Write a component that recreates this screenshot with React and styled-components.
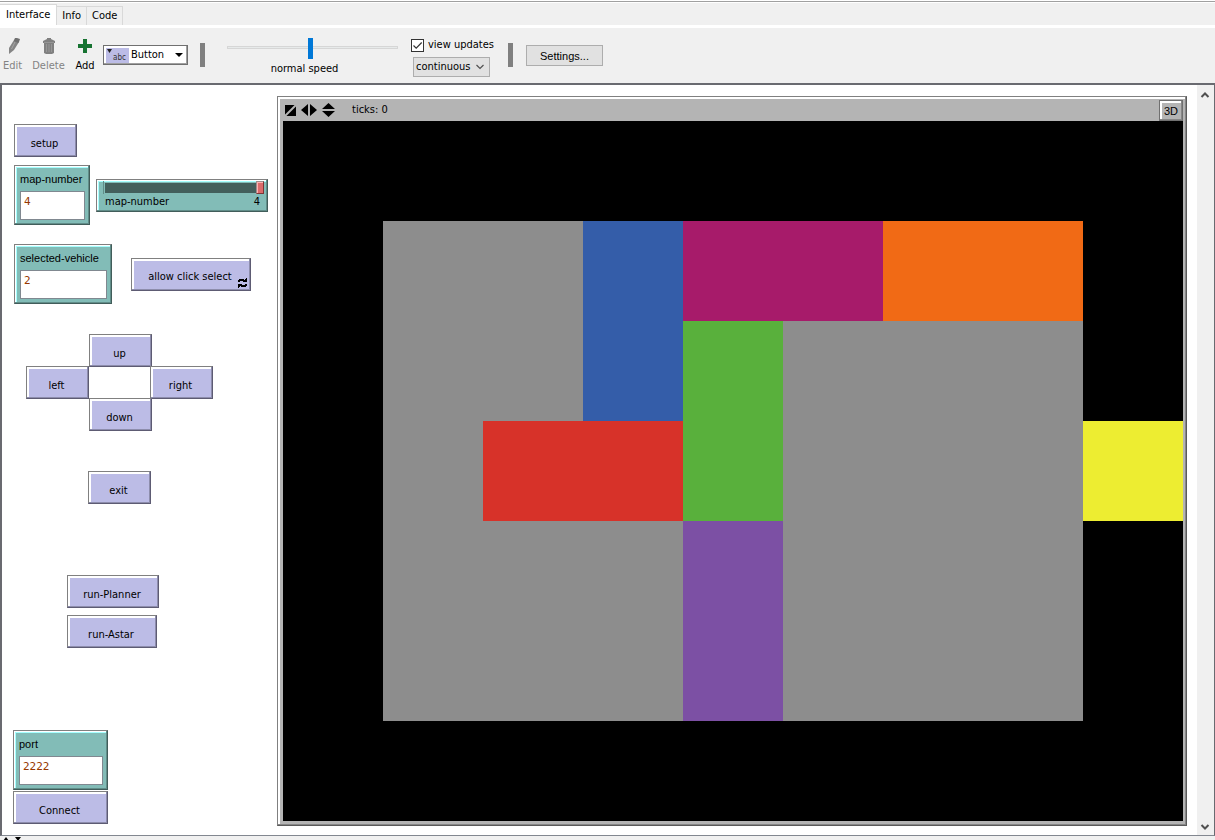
import React, { useState } from "react";
import styled, { createGlobalStyle, css } from "styled-components";

const GlobalStyle = createGlobalStyle`
  *, *::before, *::after { box-sizing: border-box; }
  body { margin: 0; background: #fff; }
  body, button, input, select {
    font-family: "DejaVu Sans Condensed", "DejaVu Sans", sans-serif;
    font-size: 11px;
    line-height: 14px;
    color: #000;
  }
`;

const App = styled.div`
  height: 100vh;
  display: flex;
  flex-direction: column;
  overflow: hidden;
  background: #f0f0f0;
`;

const TabBar = styled.div`
  flex: none;
  display: flex;
  align-items: flex-end;
  height: 28px;
  border-top: 1px solid #fff;
  border-bottom: 3px solid #fff;
  box-shadow: inset 0 1px #a0a0a0, inset 0 2px #fff;
`;

const Tab = styled.button`
  height: ${(p) => (p.$active ? 21 : 19)}px;
  padding: 0 ${(p) => (p.$active ? 6 : 5)}px;
  border: 1px solid #d9d9d9;
  border-left: 0;
  border-bottom: 0;
  background: ${(p) => (p.$active ? "#fff" : "#f0f0f0")};
`;

const Toolbar = styled.div`
  flex: none;
  display: flex;
  align-items: flex-start;
  height: 55px;
`;

const ToolButton = styled.button`
  display: flex;
  flex-direction: column;
  align-items: center;
  gap: 4px;
  width: ${(p) => p.$width}px;
  padding: 9px 1px 0 0;
  border: 0;
  background: none;
  color: ${(p) => (p.disabled ? "#838383" : "#000")};
`;

const SelectBox = styled.div`
  display: flex;
  align-items: center;
  width: ${(p) => p.$width}px;
  height: 20px;
  background: ${(p) => (p.$raised ? "#fff" : "#e1e1e1")};
  border: 1px solid ${(p) => (p.$raised ? "#707070" : "#adadad")};
  padding: 0 4px 0 2px;
  ${(p) => p.$raised && css`
    margin: 17px 12px 0 4px;
    box-shadow: inset -1px -1px #a0a0a0;
  `}
  select {
    flex: 1;
    min-width: 0;
    appearance: none;
    border: 0;
    padding: 0;
    background: none;
  }
  svg { flex: none; pointer-events: none; }
`;

const AbcIcon = styled.span`
  display: flex;
  align-items: flex-end;
  width: 23px;
  height: 15px;
  margin-right: 2px;
  background: #bcbce6;
`;

const Divider = styled.div`
  width: 5px;
  height: 24px;
  margin-top: 15px;
  background: #808080;
`;

const Speed = styled.label`
  display: flex;
  flex-direction: column;
  align-items: center;
  width: 171px;
  margin: 8px 13px 0 22px;
  span { padding-right: 16px; margin-top: 2px; }
  input {
    appearance: none;
    width: 100%;
    height: 24px;
    margin: 0;
    background:
      linear-gradient(#e7eaea, #e7eaea) 1px 11px / 169px 1px no-repeat,
      linear-gradient(#d6d6d6, #d6d6d6) 0 10px / 100% 3px no-repeat;
  }
  input::-webkit-slider-thumb {
    appearance: none;
    width: 5px;
    height: 21px;
    background: #0078d7;
  }
`;

const Updates = styled.div`
  display: flex;
  flex-direction: column;
  gap: 5px;
  width: 83px;
  margin: 10px 14px 0 0;
  white-space: nowrap;
  ${SelectBox} { margin-left: 2px; }
`;

const Check = styled.label`
  display: flex;
  align-items: center;
  gap: 4px;
  height: 14px;
  input {
    appearance: none;
    flex: none;
    width: 13px;
    height: 13px;
    margin: 0;
    border: 1px solid #333;
    background: #fff;
  }
  input:checked {
    background: #fff url("data:image/svg+xml,%3Csvg xmlns='http://www.w3.org/2000/svg' viewBox='0 0 11 11'%3E%3Cpath d='M1.5 5.5l2.7 2.7L9.7 2.5' fill='none' stroke='%23333' stroke-width='1.2'/%3E%3C/svg%3E");
  }
`;

const SettingsButton = styled.button`
  width: 77px;
  height: 21px;
  margin: 17px 0 0 13px;
  padding: 0;
  border: 1px solid #adadad;
  background: #e1e1e1;
  font-family: "Liberation Sans", sans-serif;
`;

const Canvas = styled.main`
  flex: 1;
  min-height: 0;
  display: flex;
  background: #fff;
  border: 2px solid #696a70;
  border-right-width: 1px;
  border-bottom: 1px solid #828790;
`;

const Sidebar = styled.section`
  flex: none;
  width: 275px;
  display: flex;
  flex-direction: column;
  align-items: flex-start;
  padding: 39px 0 11px 12px;
`;

const Row = styled.div`
  display: flex;
  align-items: center;
  gap: ${(p) => p.$gap}px;
  margin-top: ${(p) => p.$top}px;
`;

const CommandButton = styled.button`
  position: relative;
  width: ${(p) => p.$width || 63}px;
  height: 33px;
  padding: 6px 2px 0 0;
  border: 1px solid;
  border-color: #808080 #5d5b73 #5d5b73 #808080;
  background: #bcbce6;
  box-shadow: inset -1px -1px #8d8dac, inset 2px 2px #fff;
  svg { position: absolute; right: 3px; bottom: 2px; }
`;

const Pad = styled.div`
  display: grid;
  grid-template-columns: 63px 61px 63px;
  grid-template-rows: 32px 32px 33px;
  margin: 30px 0 40px 12px;
`;

const PadCell = styled.div`
  grid-area: ${(p) => p.$area};
`;

const Indent = styled.div`
  display: flex;
  flex-direction: column;
  gap: 7px;
  margin-left: ${(p) => p.$left}px;
`;

const Group = styled.div`
  display: flex;
  flex-direction: column;
  gap: 1px;
  margin-top: auto;
  margin-left: -1px;
`;

const teal = css`
  border: 1px solid;
  border-color: #808080 #415d5a #415d5a #808080;
  background: #82bcb7;
  box-shadow: inset -1px -1px #618d89, inset 1px 1px #fff, inset 2px 2px #a5ffff;
`;

const InputWidget = styled.label`
  ${teal}
  display: flex;
  flex-direction: column;
  gap: 5px;
  width: ${(p) => p.$width}px;
  height: 60px;
  padding: 6px 4px 4px 5px;
  font-family: "Liberation Sans", sans-serif;
  input {
    width: 100%;
    height: 29px;
    padding: 0 3px 8px;
    border: 1px solid #808890;
    background: #fff;
    color: #963700;
    font-family: "DejaVu Sans Mono", monospace;
  }
`;

const SliderWidget = styled.label`
  ${teal}
  width: 172px;
  height: 33px;
  padding: 1px 3px 0 6px;
  input {
    display: block;
    appearance: none;
    width: 100%;
    height: 13px;
    margin: 0;
    background: linear-gradient(#435f5c, #435f5c) 1px 2px / 100% 10px no-repeat;
    border-left: 1px solid #618d89;
  }
  input::-webkit-slider-thumb {
    appearance: none;
    width: 8px;
    height: 13px;
    border: 1px solid;
    border-color: #9c8c8c #7d3535 #7d3535 #9c8c8c;
    background: #db6b6b;
    box-shadow: inset 1px 1px #ffb0b0;
  }
`;

const SliderCaption = styled.span`
  display: flex;
  justify-content: space-between;
  padding: 1px 4px 0 2px;
`;

const WorldFrame = styled.section`
  flex: 1;
  align-self: flex-start;
  margin: 11px 10px 0 0;
  padding: 2px 3px 4px 5px;
  border: 1px solid;
  border-color: #808080 #5a5a5a #5a5a5a #808080;
  background: #b4b4b4;
  box-shadow: inset -1px -1px #878787, inset 2px 2px #fff;
`;

const WorldHeader = styled.header`
  display: flex;
  align-items: center;
  height: 22px;
  padding-left: 1px;
`;

const Ticks = styled.span`
  flex: 1;
  margin-left: 16px;
`;

const ViewButton = styled.button`
  width: 24px;
  height: 21px;
  padding: 2px 0 0;
  border: 1px solid #707070;
  background: #b4b4b4;
  box-shadow: inset -1px -1px #878787, inset 2px 2px #fff;
  font-family: "Liberation Sans", sans-serif;
`;

const World = styled.div`
  display: grid;
  grid-template: repeat(7, minmax(0, 1fr)) / repeat(9, minmax(0, 1fr));
  aspect-ratio: 9 / 7;
  background: #000;
`;

const Patch = styled.div`
  grid-area: ${(p) => p.$area};
  background: ${(p) => p.$color};
`;

const Scrollbar = styled.div`
  flex: none;
  display: flex;
  flex-direction: column;
  align-items: center;
  justify-content: space-between;
  width: 17px;
  padding: 6px 2px 4px 0;
  background: #f0f0f0;
`;

const BottomStrip = styled.footer`
  flex: none;
  display: flex;
  gap: 6px;
  height: 4px;
  padding: 1px 0 0 3px;
  overflow: hidden;
  svg { flex: none; }
`;

const patches = [
  ["2 / 2 / 7 / 9", "#8d8d8d"],
  ["2 / 4 / 4 / 5", "#345da9"],
  ["2 / 5 / 3 / 7", "#a71b6a"],
  ["2 / 7 / 3 / 9", "#f16a15"],
  ["3 / 5 / 5 / 6", "#59b03c"],
  ["4 / 3 / 5 / 5", "#d73229"],
  ["4 / 9 / 5 / 10", "#eded31"],
  ["5 / 5 / 7 / 6", "#7c50a4"],
];

const pad = [
  ["1 / 2", "up"],
  ["2 / 1", "left"],
  ["2 / 3", "right"],
  ["3 / 2", "down"],
];

const PencilIcon = () => (
  <svg width="16" height="18" viewBox="0 0 16 18">
    <path d="M4 11L9 3L14 5L9 13L4 17Z" fill="#858585" />
    <path d="M10 5L6.500 12" stroke="#a5a5a5" />
    <path d="M9 3L10 1H12L15 2L14 5L13 6L9 4Z" fill="#707070" />
  </svg>
);

const TrashIcon = () => (
  <svg width="16" height="18" viewBox="0 0 16 18">
    <path d="M6 2V1H10V2L14 4V6H2V4Z M3 6H13V16L11 17H5L3 16Z" fill="#808080" />
    <path d="M5.500 7V15M8 7V15M10.500 7V15M3 5.500H13" stroke="#969696" />
  </svg>
);

const PlusIcon = () => (
  <svg width="16" height="18" viewBox="0 0 16 18">
    <path d="M6 2H10V7H15V11H10V16H6V11H1V7H6Z" fill="#177331" />
  </svg>
);

const Chevron = ({ up, thick }) => (
  <svg width="10" height="8" viewBox="0 0 10 8">
    <path d={up ? "M1.5 6L5 2.5L8.5 6" : "M1.5 2L5 5.5L8.5 2"} fill="none" stroke="#505050" strokeWidth={thick ? 2 : 1.2} />
  </svg>
);

const ForeverIcon = () => (
  <svg width="9" height="10" viewBox="0 0 9 10" shapeRendering="crispEdges">
    <path d="M1 1H6V3H1ZM0 2H2V4H0ZM8 0H9V4H5V3H6V2H7V1H8Z" />
    <path d="M8 9H3V7H8ZM9 8H7V6H9ZM1 10H0V6H4V7H3V8H2V9H1Z" />
  </svg>
);

const ResizeIcons = () => (
  <svg width="52" height="16" viewBox="0 0 52 16">
    <path d="M1 3H12V14H1ZM17 8L24 2V14ZM26 2L33 8L26 14ZM38 7L44.500 1L51 7ZM38 9H51L44.500 15Z" />
    <path d="M1 14L12 3" stroke="#b4b4b4" strokeWidth="2" />
  </svg>
);

export default function Interface() {
  const [mapNumber, setMapNumber] = useState("4");
  const [vehicle, setVehicle] = useState("2");
  const [port, setPort] = useState("2222");
  const [tab, setTab] = useState("Interface");

  return (
    <App>
      <GlobalStyle />
      <TabBar role="tablist">
        {["Interface", "Info", "Code"].map((name) => (
          <Tab key={name} role="tab" aria-selected={tab === name} $active={tab === name} onClick={() => setTab(name)}>
            {name}
          </Tab>
        ))}
      </TabBar>
      <Toolbar>
        <ToolButton $width={26} disabled><PencilIcon />Edit</ToolButton>
        <ToolButton $width={46} disabled><TrashIcon />Delete</ToolButton>
        <ToolButton $width={27}><PlusIcon />Add</ToolButton>
        <SelectBox $width={85} $raised>
          <AbcIcon>
            <svg width="23" height="15" viewBox="0 0 23 15">
              <path d="M1 1H6L3.500 5Z" fill="#222" />
              <text x="7" y="12" fontSize="8" fill="#333">abc</text>
            </svg>
          </AbcIcon>
          <select aria-label="Widget type" defaultValue="Button">
            <option>Button</option>
          </select>
          <svg width="8" height="5" viewBox="0 0 8 5"><path d="M0 0H8L4 4Z" /></svg>
        </SelectBox>
        <Divider />
        <Speed>
          <input type="range" min="0" max="100" defaultValue="49" />
          <span>normal speed</span>
        </Speed>
        <Updates>
          <Check><input type="checkbox" defaultChecked />view updates</Check>
          <SelectBox $width={77}>
            <select aria-label="Update mode" defaultValue="continuous">
              <option>continuous</option>
            </select>
            <Chevron />
          </SelectBox>
        </Updates>
        <Divider />
        <SettingsButton>Settings...</SettingsButton>
      </Toolbar>
      <Canvas>
        <Sidebar>
          <CommandButton>setup</CommandButton>
          <Row $gap={6} $top={8}>
            <InputWidget $width={76}>
              map-number
              <input value={mapNumber} onChange={(e) => setMapNumber(e.target.value)} />
            </InputWidget>
            <SliderWidget>
              <input type="range" min="1" max="4" value={mapNumber} onChange={(e) => setMapNumber(e.target.value)} />
              <SliderCaption><span>map-number</span><span>{mapNumber}</span></SliderCaption>
            </SliderWidget>
          </Row>
          <Row $gap={19} $top={19}>
            <InputWidget $width={98}>
              selected-vehicle
              <input value={vehicle} onChange={(e) => setVehicle(e.target.value)} />
            </InputWidget>
            <CommandButton $width={120}>allow click select<ForeverIcon /></CommandButton>
          </Row>
          <Pad>
            {pad.map(([area, name]) => (
              <PadCell key={name} $area={area}><CommandButton>{name}</CommandButton></PadCell>
            ))}
          </Pad>
          <Indent $left={74}>
            <CommandButton>exit</CommandButton>
          </Indent>
          <Row $top={71}>
            <Indent $left={53}>
              <CommandButton $width={92}>run-Planner</CommandButton>
              <CommandButton $width={90}>run-Astar</CommandButton>
            </Indent>
          </Row>
          <Group>
            <InputWidget $width={95}>
              port
              <input value={port} onChange={(e) => setPort(e.target.value)} />
            </InputWidget>
            <CommandButton $width={95}>Connect</CommandButton>
          </Group>
        </Sidebar>
        <WorldFrame>
          <WorldHeader>
            <ResizeIcons />
            <Ticks>ticks: 0</Ticks>
            <ViewButton>3D</ViewButton>
          </WorldHeader>
          <World>
            {patches.map(([area, color]) => <Patch key={area} $area={area} $color={color} />)}
          </World>
        </WorldFrame>
        <Scrollbar>
          <Chevron up thick />
          <Chevron thick />
        </Scrollbar>
      </Canvas>
      <BottomStrip>
        <svg width="6" height="4" viewBox="0 0 6 4"><path d="M0 4L3 0L6 4Z" /></svg>
        <svg width="6" height="4" viewBox="0 0 6 4"><path d="M0 0H6L3 4Z" /></svg>
      </BottomStrip>
    </App>
  );
}
